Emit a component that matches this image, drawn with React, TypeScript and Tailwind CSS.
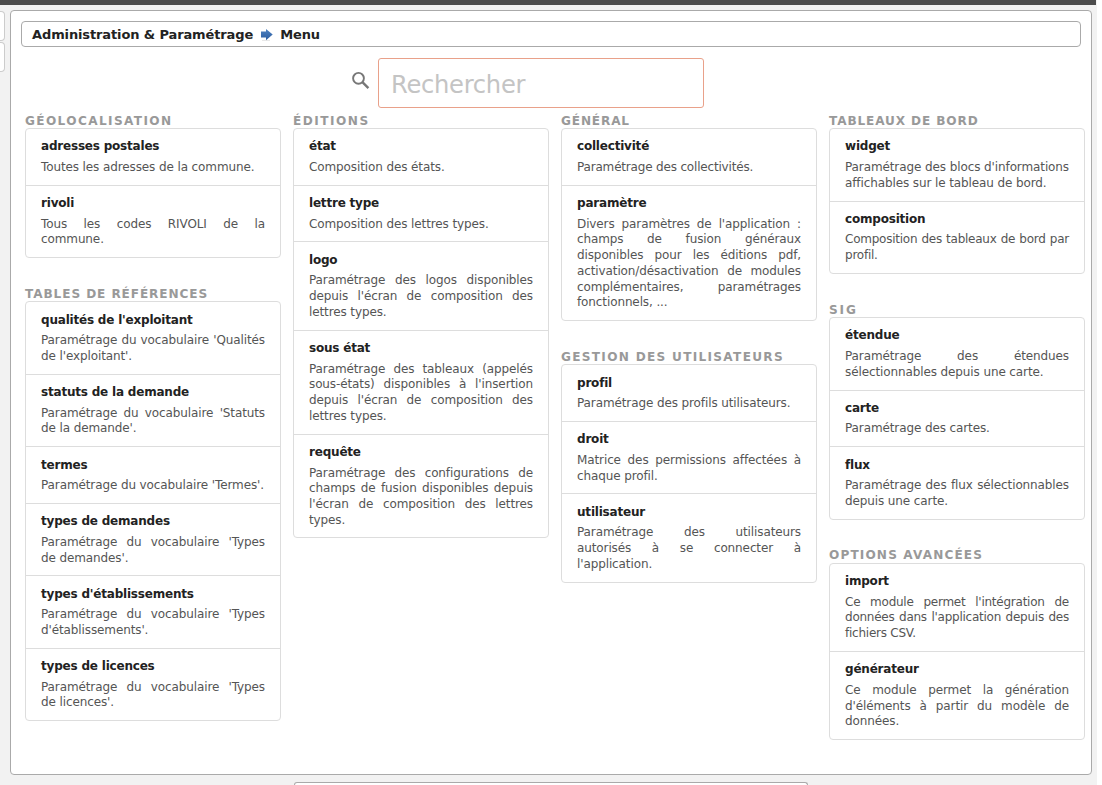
type Item = [name: string, text: string, tracking?: string];
type Group = { title: string; tracking: string; items: Item[] };

const columns: Group[][] = [
  [
    {
      title: "Géolocalisation",
      tracking: "tracking-[1.38px]",
      items: [
        ["adresses postales", "Toutes les adresses de la commune."],
        ["rivoli", "Tous les codes RIVOLI de la commune."],
      ],
    },
    {
      title: "Tables de références",
      tracking: "tracking-[0.91px]",
      items: [
        ["qualités de l'exploitant", "Paramétrage du vocabulaire 'Qualités de l'exploitant'."],
        ["statuts de la demande", "Paramétrage du vocabulaire 'Statuts de la demande'."],
        ["termes", "Paramétrage du vocabulaire 'Termes'."],
        ["types de demandes", "Paramétrage du vocabulaire 'Types de demandes'."],
        ["types d'établissements", "Paramétrage du vocabulaire 'Types d'établissements'."],
        ["types de licences", "Paramétrage du vocabulaire 'Types de licences'."],
      ],
    },
  ],
  [
    {
      title: "Éditions",
      tracking: "tracking-[1.5px]",
      items: [
        ["état", "Composition des états."],
        ["lettre type", "Composition des lettres types."],
        ["logo", "Paramétrage des logos disponibles depuis l'écran de composition des lettres types."],
        ["sous état", "Paramétrage des tableaux (appelés sous-états) disponibles à l'insertion depuis l'écran de composition des lettres types."],
        ["requête", "Paramétrage des configurations de champs de fusion disponibles depuis l'écran de composition des lettres types."],
      ],
    },
  ],
  [
    {
      title: "Général",
      tracking: "tracking-[0.85px]",
      items: [
        ["collectivité", "Paramétrage des collectivités.", "tracking-[-0.18px]"],
        ["paramètre", "Divers paramètres de l'application : champs de fusion généraux disponibles pour les éditions pdf, activation/désactivation de modules complémentaires, paramétrages fonctionnels, ..."],
      ],
    },
    {
      title: "Gestion des utilisateurs",
      tracking: "tracking-[1.3px]",
      items: [
        ["profil", "Paramétrage des profils utilisateurs."],
        ["droit", "Matrice des permissions affectées à chaque profil."],
        ["utilisateur", "Paramétrage des utilisateurs autorisés à se connecter à l'application."],
      ],
    },
  ],
  [
    {
      title: "Tableaux de bord",
      tracking: "tracking-[0.88px]",
      items: [
        ["widget", "Paramétrage des blocs d'informations affichables sur le tableau de bord."],
        ["composition", "Composition des tableaux de bord par profil.", "tracking-[-0.24px]"],
      ],
    },
    {
      title: "SIG",
      tracking: "tracking-[1.9px]",
      items: [
        ["étendue", "Paramétrage des étendues sélectionnables depuis une carte."],
        ["carte", "Paramétrage des cartes."],
        ["flux", "Paramétrage des flux sélectionnables depuis une carte."],
      ],
    },
    {
      title: "Options avancées",
      tracking: "tracking-[1.14px]",
      items: [
        ["import", "Ce module permet l'intégration de données dans l'application depuis des fichiers CSV.", "tracking-[-0.24px]"],
        ["générateur", "Ce module permet la génération d'éléments à partir du modèle de données."],
      ],
    },
  ],
];

function MenuGroup({ title, tracking, items }: Group) {
  return (
    <section className="mb-[27.45px]">
      <h2 className={`pt-[1.4px] text-[12.1px] leading-[14.33px] font-bold text-[#999] uppercase whitespace-nowrap ${tracking}`}>
        {title}
      </h2>
      <ul className="rounded-[4px] border border-[#ddd] bg-white">
        {items.map(([name, text, textTracking = "tracking-[-0.11px]"]) => (
          <li key={name} className="border-b border-[#ddd] px-[15px] pt-[10.4px] pb-[8.96px] last:border-b-0">
            <h3 className="mb-[4.84px] font-bold tracking-[-0.2px] text-[#222]">{name}</h3>
            <p className={`text-justify text-[#555] ${textTracking}`}>{text}</p>
          </li>
        ))}
      </ul>
    </section>
  );
}

function ArrowIcon() {
  return (
    <svg className="mx-[7px] h-[12px] w-[13px]" viewBox="0 0 13 12">
      <defs>
        <linearGradient id="arrow" x1="0" y1="0" x2="0" y2="1">
          <stop offset="0" stopColor="#4f82c0" />
          <stop offset="1" stopColor="#2b5ca0" />
        </linearGradient>
      </defs>
      <path d="M2 11.4h8" stroke="#e6e6e6" />
      <path d="M1 2.6h5V0L12.7 5.6 6 11.2V8.6H1z" fill="url(#arrow)" />
    </svg>
  );
}

export default function App() {
  return (
    <div className="flex h-[785px] w-[1102px] overflow-hidden bg-white font-['DejaVu_Sans',sans-serif] text-[12px] leading-[15.75px]">
      <div className="flex w-[1097px] flex-col bg-[#f2f2f2]">
        <div className="mr-px h-[5px] shrink-0 bg-[#4c4c4c]" />
        <div className="flex pt-[5px]">
          <aside className="mr-[5px] w-[5px] shrink-0 pt-px">
            <div className="h-[30px] rounded-r-[4px] border border-l-0 border-[#ccc] bg-white" />
            <div className="mt-px h-[30px] rounded-r-[4px] border border-l-0 border-[#ccc] bg-white" />
          </aside>
          <main className="h-[765px] w-[1082px] shrink-0 rounded-[4px] border border-[#aaa] bg-white p-[10px]">
            <div className="flex h-[26px] w-[1060px] items-center rounded-[4px] border border-[#aaa] pt-px pl-[10px] text-[13px] font-bold tracking-[-0.12px] text-[#222]">
              <span>Administration &amp; Paramétrage</span>
              <ArrowIcon />
              <span>Menu</span>
            </div>
            <div className="mt-[11px] flex h-[50px] pl-[327px]">
              <svg className="mt-[10px] mr-[3px] size-[27px] shrink-0" viewBox="0 0 27 27">
                <circle cx="10.5" cy="10.3" r="5.4" fill="none" stroke="#777" strokeWidth="1.9" />
                <path d="M14.4 14.2l6 6" stroke="#777" strokeWidth="2.4" />
              </svg>
              <input
                placeholder="Rechercher"
                className="h-[50px] w-[326px] rounded-[3px] border border-[#e9a18a] bg-white px-[12px] pt-[3px] text-[24.2px] tracking-[-0.28px] text-[#555] outline-none placeholder:text-[#c4c4c4]"
              />
            </div>
            <div className="mt-[4.38px] ml-[4px] grid w-[1060px] grid-cols-4 gap-x-[12px]">
              {columns.map((groups, i) => (
                <div key={i}>
                  {groups.map((group) => (
                    <MenuGroup key={group.title} {...group} />
                  ))}
                </div>
              ))}
            </div>
          </main>
        </div>
        <footer className="mt-[7px] ml-[294px] h-[3px] w-[514px] shrink-0 rounded-t-[4px] border border-b-0 border-[#aaa] bg-white" />
      </div>
    </div>
  );
}
